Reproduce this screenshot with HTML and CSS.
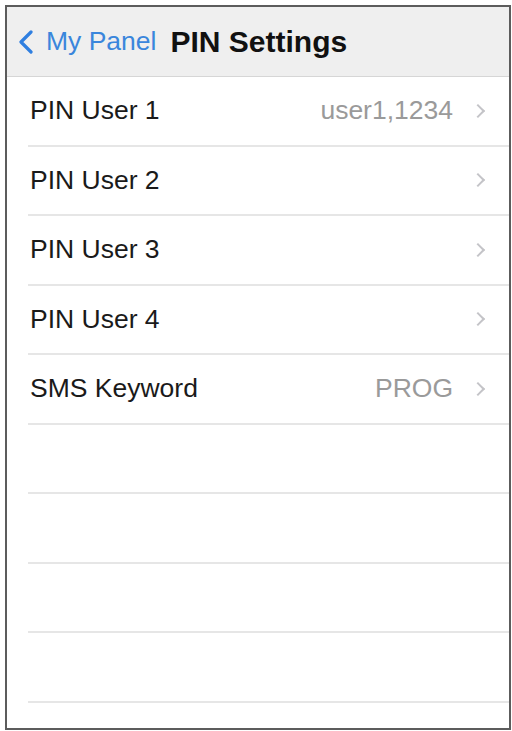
FILE: index.html
```html
<!DOCTYPE html>
<html lang="en">
<head>
    <meta charset="UTF-8">
    <meta name="viewport" content="width=device-width, initial-scale=1.0">
    <title>PIN Settings</title>
    <link rel="stylesheet" href="styles.css">
</head>
<body>
    <div class="phone">
        <header class="navbar">
            <a href="#" class="back">
                <svg class="back-icon" width="16" height="24" viewBox="0 0 16 24">
                    <path d="M13 2 L3 12 L13 22" fill="none" stroke="#2f7fe0" stroke-width="3.2" stroke-linecap="round" stroke-linejoin="round"/>
                </svg>
                <span>My Panel</span>
            </a>
            <h1 class="title">PIN Settings</h1>
        </header>

        <ul class="list">
            <li class="row">
                <span class="label">PIN User 1</span>
                <span class="value">user1,1234</span>
                <span class="chevron"></span>
            </li>
            <li class="row">
                <span class="label">PIN User 2</span>
                <span class="chevron"></span>
            </li>
            <li class="row">
                <span class="label">PIN User 3</span>
                <span class="chevron"></span>
            </li>
            <li class="row">
                <span class="label">PIN User 4</span>
                <span class="chevron"></span>
            </li>
            <li class="row">
                <span class="label">SMS Keyword</span>
                <span class="value">PROG</span>
                <span class="chevron"></span>
            </li>
            <li class="row empty"></li>
            <li class="row empty"></li>
            <li class="row empty"></li>
            <li class="row empty"></li>
        </ul>
    </div>
</body>
</html>
```

FILE: styles.css
```css
* {
    margin: 0;
    padding: 0;
    box-sizing: border-box;
}

body {
    font-family: "Liberation Sans", Arial, sans-serif;
    background: #fff;
}

.phone {
    margin: 5px 0 0 5px;
    width: 506px;
    height: 725px;
    border: 2px solid #5c5c5c;
    background: #fff;
    overflow: hidden;
}

.navbar {
    display: flex;
    align-items: center;
    height: 70px;
    background: #efefef;
    border-bottom: 1px solid #d6d6d6;
    padding-left: 11px;
}

.back {
    display: flex;
    align-items: center;
    gap: 12px;
    text-decoration: none;
    color: #3a86dc;
    font-size: 26.5px;
    margin-right: 14px;
}

.back-icon {
    display: block;
}

.title {
    font-size: 30px;
    font-weight: bold;
    color: #111;
}

.list {
    list-style: none;
    margin-left: 21px;
}

.row {
    display: flex;
    align-items: center;
    height: 69.5px;
    border-bottom: 2px solid #e6e6e6;
    padding-left: 2px;
    padding-right: 26px;
    font-size: 26.5px;
    color: #1a1a1a;
}

.label {
    flex: 1;
}

.value {
    color: #9a9a9a;
    margin-right: 20px;
}

.chevron {
    width: 10px;
    height: 10px;
    border-top: 2px solid #c4c4c8;
    border-right: 2px solid #c4c4c8;
    transform: rotate(45deg);
}
```
